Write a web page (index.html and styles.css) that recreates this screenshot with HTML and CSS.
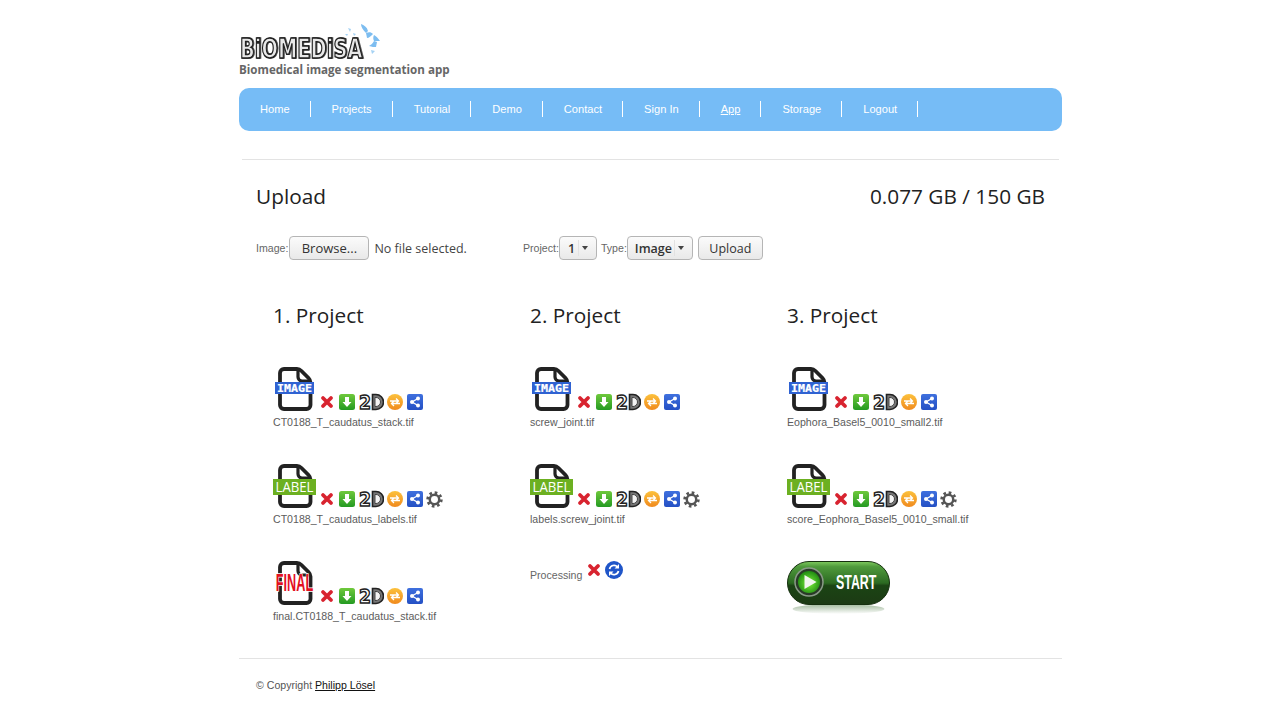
FILE: index.html
```html
<!DOCTYPE html>
<html lang="en">
<head>
    <meta charset="UTF-8">
    <title>Biomedisa</title>
    <link rel="stylesheet" href="styles.css">
</head>
<body>
<svg class="defs" width="0" height="0">
    <defs>
        <linearGradient id="gGreen" x1="0" y1="0" x2="0" y2="1"><stop offset="0" stop-color="#6fc93c"/><stop offset="1" stop-color="#249a22"/></linearGradient>
        <linearGradient id="gOrange" x1="0" y1="0" x2="0" y2="1"><stop offset="0" stop-color="#fcc13c"/><stop offset="1" stop-color="#f08a1e"/></linearGradient>
        <linearGradient id="gBlue" x1="0" y1="0" x2="0" y2="1"><stop offset="0" stop-color="#3f70de"/><stop offset="1" stop-color="#2450c4"/></linearGradient>
        <linearGradient id="gPill" x1="0" y1="0" x2="0" y2="1"><stop offset="0" stop-color="#7fcb5e"/><stop offset=".12" stop-color="#4f9a3c"/><stop offset=".5" stop-color="#2c6a22"/><stop offset=".56" stop-color="#1b4414"/><stop offset="1" stop-color="#1c3a14"/></linearGradient>
        <linearGradient id="gShine" x1="0" y1="0" x2="0" y2="1"><stop offset="0" stop-color="#9fb89a"/><stop offset="1" stop-color="#fff"/></linearGradient>
        <radialGradient id="gBall" cx=".5" cy=".55" r=".55"><stop offset="0" stop-color="#7ef23a"/><stop offset="1" stop-color="#1f8a12"/></radialGradient>
        <symbol id="doc" viewBox="0 0 44 45">
            <path d="M11 3h13c2 0 3 .5 4.500 2l7 7c1.500 1.500 2 2.500 2 4.500V39a4 4 0 0 1-4 4H11a4 4 0 0 1-4-4V7a4 4 0 0 1 4-4z" fill="#fff" stroke="#222" stroke-width="3.800" stroke-linejoin="round"/>
            <path d="M25 4v7a4 4 0 0 0 4 4h7" fill="none" stroke="#222" stroke-width="3.200"/>
        </symbol>
        <symbol id="del" viewBox="0 0 16 16">
            <path d="M4 4l8 8M12 4l-8 8" stroke="#d8232f" stroke-width="3.800" stroke-linecap="round"/>
        </symbol>
        <symbol id="down" viewBox="0 0 16 16">
            <rect width="16" height="16" rx="2.500" fill="url(#gGreen)"/>
            <path d="M6 3h4v5h2.500L8 13 3.500 8H6z" fill="#fff"/>
        </symbol>
        <symbol id="twod" viewBox="0 0 26 18">
            <text x="1" y="15.500" class="twod-text" textLength="12" lengthAdjust="spacingAndGlyphs">2</text>
            <path d="M14.500 1.500h3.500a7.500 7.500 0 0 1 0 15h-3.500z" fill="#777" stroke="#222" stroke-width="1.600"/>
            <path d="M17 4.500v9h1a4.500 4.500 0 0 0 0-9z" fill="#f4f4f4" stroke="#444"/>
        </symbol>
        <symbol id="convert" viewBox="0 0 16 16">
            <circle cx="8" cy="8" r="8" fill="url(#gOrange)"/>
            <path d="M3 7h8M9 4.500l2.500 2.500L9 9.500M13 9.500H5M7 7L4.500 9.500 7 12" fill="none" stroke="#fff" stroke-width="1.300"/>
        </symbol>
        <symbol id="share" viewBox="0 0 16 16">
            <rect width="16" height="16" rx="2" fill="url(#gBlue)"/>
            <path d="M11 4.500L5 8l6 3.500" fill="none" stroke="#fff" stroke-width="1.300"/>
            <circle cx="11" cy="4.500" r="2" fill="#fff"/><circle cx="5" cy="8" r="2" fill="#fff"/><circle cx="11" cy="11.500" r="2" fill="#fff"/>
        </symbol>
        <symbol id="gear" viewBox="0 0 18 18">
            <circle cx="9" cy="9" r="5" fill="none" stroke="#555" stroke-width="2.600"/>
            <circle cx="9" cy="9" r="7.300" fill="none" stroke="#555" stroke-width="2.800" stroke-dasharray="2.800 2.930"/>
        </symbol>
        <symbol id="refresh" viewBox="0 0 18 18">
            <circle cx="9" cy="9" r="9" fill="#1f55c8"/>
            <path d="M4.500 8a4.600 4.600 0 0 1 8-2M13.500 10a4.600 4.600 0 0 1-8 2" fill="none" stroke="#fff" stroke-width="1.700"/>
            <path d="M14 3v4.500H9.500zM4 15v-4.500h4.500z" fill="#fff"/>
        </symbol>
    </defs>
</svg>

<div class="page">
    <header class="site-head">
        <svg class="logo" width="142" height="37" viewBox="0 0 142 37">
            <g transform="translate(1 34) scale(.72 1)">
                <text class="logo-text">BiOMEDiSA</text>
            </g>
            <path d="M127 9C124 6 122 3 122 0c3 1 6 3 7 7zM127 9c3-1 5-1 7 1-2 2-4 4-6 4z" fill="#7dbdf0"/>
            <path d="M135 17c-1-2-1-4 0-6 2 1 4 3 6 6zM135 17c-1 2-3 4-5 5 3 1 5 1 7 1l1-5z" fill="#7dbdf0"/>
            <path d="M109 4l3 1-1 3zM114 9l3 1-2 2zM106 10l3 0-1 2zM132 26l4 1-3 3z" fill="#a5d2f4"/>
        </svg>
        <div class="tagline">Biomedical image segmentation app</div>
    </header>

    <nav class="nav">
        <a href="#">Home</a>
        <a href="#">Projects</a>
        <a href="#">Tutorial</a>
        <a href="#">Demo</a>
        <a href="#">Contact</a>
        <a href="#">Sign In</a>
        <a href="#" class="current">App</a>
        <a href="#">Storage</a>
        <a href="#">Logout</a>
    </nav>

    <main class="main">
        <div class="title-row">
            <h1>Upload</h1>
            <h1>0.077 GB / 150 GB</h1>
        </div>

        <form class="upload">
            <div class="upload-file">
                <label>Image:</label>
                <button type="button" class="btn browse">Browse...</button>
                <span class="no-file">No file selected.</span>
            </div>
            <label>Project:</label>
            <span class="btn select select-project">1<i class="arrow"></i></span>
            <label>Type:</label>
            <span class="btn select select-type">Image<i class="arrow"></i></span>
            <button type="button" class="btn upload-btn">Upload</button>
        </form>

        <div class="projects">
            <section class="project">
                <h2>1. Project</h2>
                <div class="file">
                    <div class="icons">
                        <span class="doc"><svg class="doc-svg"><use href="#doc"/></svg><svg class="tag" viewBox="0 0 44 45"><rect x="2" y="16" width="39" height="12" fill="#2f62d2"/><text x="21.500" y="26" class="tag-image" textLength="35" lengthAdjust="spacingAndGlyphs">IMAGE</text></svg></span>
                        <svg class="i del"><use href="#del"/></svg><svg class="i"><use href="#down"/></svg><svg class="i wide"><use href="#twod"/></svg><svg class="i convert"><use href="#convert"/></svg><svg class="i"><use href="#share"/></svg>
                    </div>
                    <p>CT0188_T_caudatus_stack.tif</p>
                </div>
                <div class="file">
                    <div class="icons">
                        <span class="doc"><svg class="doc-svg"><use href="#doc"/></svg><svg class="tag" viewBox="0 0 44 45"><rect x="0" y="16" width="43" height="16" fill="#6cb021"/><text x="21.500" y="29" class="tag-label" textLength="38" lengthAdjust="spacingAndGlyphs">LABEL</text></svg></span>
                        <svg class="i del"><use href="#del"/></svg><svg class="i"><use href="#down"/></svg><svg class="i wide"><use href="#twod"/></svg><svg class="i convert"><use href="#convert"/></svg><svg class="i"><use href="#share"/></svg><svg class="i gear"><use href="#gear"/></svg>
                    </div>
                    <p>CT0188_T_caudatus_labels.tif</p>
                </div>
                <div class="file">
                    <div class="icons">
                        <span class="doc"><svg class="doc-svg"><use href="#doc"/></svg><svg class="tag" viewBox="0 0 44 45"><g transform="translate(21.500 31) scale(.54 1)"><text class="tag-final">FINAL</text></g></svg></span>
                        <svg class="i del"><use href="#del"/></svg><svg class="i"><use href="#down"/></svg><svg class="i wide"><use href="#twod"/></svg><svg class="i convert"><use href="#convert"/></svg><svg class="i"><use href="#share"/></svg>
                    </div>
                    <p>final.CT0188_T_caudatus_stack.tif</p>
                </div>
            </section>

            <section class="project">
                <h2>2. Project</h2>
                <div class="file">
                    <div class="icons">
                        <span class="doc"><svg class="doc-svg"><use href="#doc"/></svg><svg class="tag" viewBox="0 0 44 45"><rect x="2" y="16" width="39" height="12" fill="#2f62d2"/><text x="21.500" y="26" class="tag-image" textLength="35" lengthAdjust="spacingAndGlyphs">IMAGE</text></svg></span>
                        <svg class="i del"><use href="#del"/></svg><svg class="i"><use href="#down"/></svg><svg class="i wide"><use href="#twod"/></svg><svg class="i convert"><use href="#convert"/></svg><svg class="i"><use href="#share"/></svg>
                    </div>
                    <p>screw_joint.tif</p>
                </div>
                <div class="file">
                    <div class="icons">
                        <span class="doc"><svg class="doc-svg"><use href="#doc"/></svg><svg class="tag" viewBox="0 0 44 45"><rect x="0" y="16" width="43" height="16" fill="#6cb021"/><text x="21.500" y="29" class="tag-label" textLength="38" lengthAdjust="spacingAndGlyphs">LABEL</text></svg></span>
                        <svg class="i del"><use href="#del"/></svg><svg class="i"><use href="#down"/></svg><svg class="i wide"><use href="#twod"/></svg><svg class="i convert"><use href="#convert"/></svg><svg class="i"><use href="#share"/></svg><svg class="i gear"><use href="#gear"/></svg>
                    </div>
                    <p>labels.screw_joint.tif</p>
                </div>
                <div class="processing">
                    <span>Processing</span>
                    <svg class="i del-small"><use href="#del"/></svg>
                    <svg class="i refresh"><use href="#refresh"/></svg>
                </div>
            </section>

            <section class="project">
                <h2>3. Project</h2>
                <div class="file">
                    <div class="icons">
                        <span class="doc"><svg class="doc-svg"><use href="#doc"/></svg><svg class="tag" viewBox="0 0 44 45"><rect x="2" y="16" width="39" height="12" fill="#2f62d2"/><text x="21.500" y="26" class="tag-image" textLength="35" lengthAdjust="spacingAndGlyphs">IMAGE</text></svg></span>
                        <svg class="i del"><use href="#del"/></svg><svg class="i"><use href="#down"/></svg><svg class="i wide"><use href="#twod"/></svg><svg class="i convert"><use href="#convert"/></svg><svg class="i"><use href="#share"/></svg>
                    </div>
                    <p>Eophora_Basel5_0010_small2.tif</p>
                </div>
                <div class="file">
                    <div class="icons">
                        <span class="doc"><svg class="doc-svg"><use href="#doc"/></svg><svg class="tag" viewBox="0 0 44 45"><rect x="0" y="16" width="43" height="16" fill="#6cb021"/><text x="21.500" y="29" class="tag-label" textLength="38" lengthAdjust="spacingAndGlyphs">LABEL</text></svg></span>
                        <svg class="i del"><use href="#del"/></svg><svg class="i"><use href="#down"/></svg><svg class="i wide"><use href="#twod"/></svg><svg class="i convert"><use href="#convert"/></svg><svg class="i"><use href="#share"/></svg><svg class="i gear"><use href="#gear"/></svg>
                    </div>
                    <p>score_Eophora_Basel5_0010_small.tif</p>
                </div>
                <svg class="start" width="104" height="54" viewBox="0 0 104 54">
                    <ellipse cx="51.500" cy="48" rx="46" ry="5" fill="url(#gShine)"/>
                    <rect x="0.500" y="0.500" width="102" height="43" rx="21.500" fill="url(#gPill)" stroke="#16300f"/>
                    <circle cx="22" cy="21" r="14" fill="#2a3a28" stroke="#8a9a88" stroke-width="1.500"/>
                    <circle cx="22" cy="21" r="11" fill="url(#gBall)"/>
                    <path d="M17.500 14l12 7-12 7z" fill="#f2f6ee"/>
                    <g transform="translate(49 28) scale(.62 1)">
                        <text class="start-text">START</text>
                    </g>
                </svg>
            </section>
        </div>
    </main>

    <footer class="footer">
        &copy; Copyright <a href="#">Philipp Lösel</a>
    </footer>
</div>
</body>
</html>
```

FILE: styles.css
```css
body {
    margin: 0;
    background: #fff;
    font-family: "Liberation Sans", Arial, sans-serif;
    font-size: 10.600px;
    color: #555;
}
.defs {
    display: block;
    height: 0;
}
.page {
    width: 823px;
    margin-left: 239px;
}
.site-head {
    padding-top: 24px;
}
.logo {
    display: block;
    overflow: visible;
}
.logo-text {
    font-family: "DejaVu Sans", sans-serif;
    font-size: 27px;
    font-weight: bold;
    fill: #e8e8e8;
    stroke: #222;
    stroke-width: 1.500;
    filter: drop-shadow(1px 0 0 #222);
}
.tagline {
    height: 18px;
    line-height: 18px;
    font-family: "Open Sans", sans-serif;
    font-size: 11.600px;
    font-weight: bold;
    color: #666;
}
.nav {
    display: flex;
    align-items: center;
    box-sizing: border-box;
    height: 43px;
    margin-top: 9px;
    padding-bottom: 1px;
    background: #76bcf6;
    border-radius: 10px;
}
.nav a {
    padding: 0 20px 0 21px;
    border-right: 1px solid #fff;
    line-height: 16px;
    font-size: 11.100px;
    color: #fff;
    text-decoration: none;
}
.nav a.current {
    text-decoration: underline;
}
.main {
    margin: 28px 3px 0;
    border-top: 1px solid #e3e3e3;
}
.title-row {
    display: flex;
    justify-content: space-between;
    margin-top: 21px;
    padding: 0 14px;
}
h1, h2 {
    margin: 0;
    font-family: "Open Sans", sans-serif;
    font-size: 20.800px;
    line-height: 30px;
    font-weight: normal;
    color: #222;
}
.upload {
    display: flex;
    align-items: center;
    height: 24px;
    margin-top: 25px;
    padding-left: 14px;
}
.upload label {
    color: #666;
}
.upload-file {
    display: flex;
    align-items: center;
    width: 267px;
}
.btn {
    display: inline-flex;
    align-items: center;
    justify-content: center;
    box-sizing: border-box;
    height: 24px;
    margin: 0 3px 0 1px;
    padding: 0 8px;
    background: linear-gradient(#fbfbfb, #e9e9e9);
    border: 1px solid #b5b5b5;
    border-radius: 4px;
    font-family: "Open Sans", sans-serif;
    font-size: 13px;
    color: #333;
}
.browse {
    width: 80px;
}
.no-file {
    margin-left: 2px;
    font-family: "Open Sans", sans-serif;
    font-size: 12.500px;
    color: #444;
}
.select {
    justify-content: space-between;
    padding-right: 4px;
    font-size: 12.500px;
    font-weight: 600;
}
.select-project {
    width: 38px;
    margin: 0 4px 0 0;
}
.select-type {
    width: 66px;
    margin-left: 0;
    padding-left: 7px;
}
.arrow {
    display: flex;
    align-items: center;
    justify-content: center;
    width: 14px;
    height: 16px;
    border-left: 1px solid #e2e2e2;
    box-sizing: border-box;
}
.arrow::after {
    content: "";
    border-top: 4px solid #444;
    border-left: 3px solid transparent;
    border-right: 3px solid transparent;
}
.upload-btn {
    width: 65px;
    margin-left: 2px;
    font-size: 12.500px;
}
.projects {
    display: flex;
    margin-top: 40px;
    padding-left: 31px;
}
.project {
    width: 257px;
}
.project h2 {
    margin-bottom: 36px;
}
.file {
    height: 97px;
}
.icons {
    display: flex;
    align-items: flex-end;
    height: 45px;
}
.doc {
    position: relative;
    width: 44px;
    height: 45px;
}
.doc-svg, .tag {
    position: absolute;
    left: 0;
    top: 0;
    width: 44px;
    height: 45px;
}
.tag text {
    text-anchor: middle;
    fill: #fff;
}
.tag-image {
    font-family: "DejaVu Sans Mono", monospace;
    font-size: 10.500px;
    font-weight: bold;
    stroke: #fff;
    stroke-width: .2;
}
.tag-label {
    font-family: "Open Sans", sans-serif;
    font-size: 14.500px;
}
.tag .tag-final {
    font-family: "Liberation Sans", sans-serif;
    font-size: 23.500px;
    font-weight: bold;
    fill: #e3101f;
    stroke: #fff;
    stroke-width: 1.500;
    paint-order: stroke;
}
.i {
    display: block;
    flex: none;
    width: 16px;
    height: 16px;
    margin: 0 0 1px 4px;
}
.del {
    margin-left: 2px;
}
.wide {
    width: 26px;
    height: 18px;
    margin: 0 0 0 3px;
}
.convert {
    margin-left: 3px;
}
.gear {
    width: 17px;
    height: 17px;
    margin: 0 0 0 3px;
}
.twod-text {
    font-family: "DejaVu Sans", sans-serif;
    font-size: 19px;
    font-weight: bold;
    fill: #fff;
    stroke: #222;
    stroke-width: 1.500;
}
.file p {
    margin: 4px 0 0;
    line-height: 14px;
    font-size: 10.600px;
    color: #5c5c5c;
}
.processing {
    display: flex;
    align-items: center;
    height: 24px;
    margin-top: -2px;
    color: #666;
}
.processing span {
    padding-top: 10px;
}
.del-small {
    margin: 0 0 0 4px;
}
.refresh {
    width: 18px;
    height: 18px;
    margin: 0 0 0 3px;
}
.start {
    display: block;
    margin-top: 1px;
}
.start-text {
    font-family: "Liberation Sans", sans-serif;
    font-size: 20px;
    font-weight: bold;
    fill: #fff;
}
.footer {
    margin-top: 1px;
    padding: 17px 17px 0;
    border-top: 1px solid #e3e3e3;
    line-height: 18px;
    color: #555;
}
.footer a {
    color: #111;
}
```
